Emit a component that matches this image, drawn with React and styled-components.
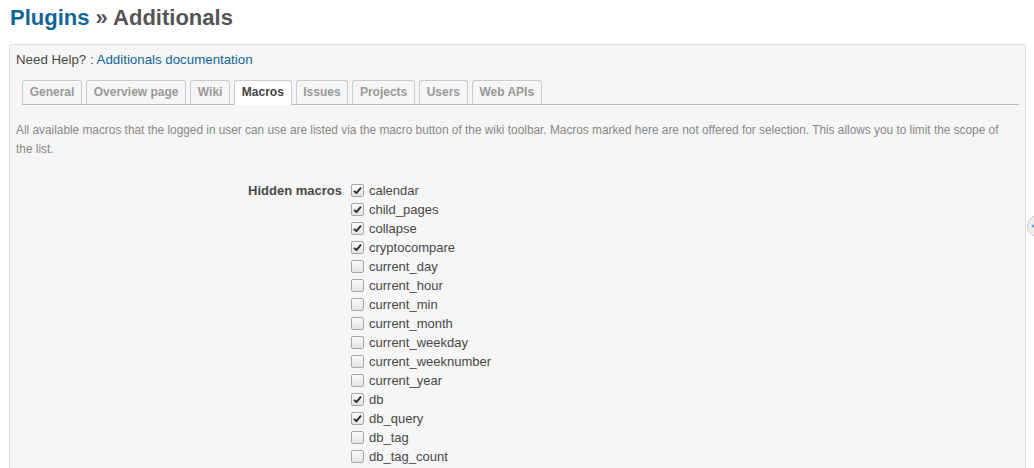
import styled, { createGlobalStyle } from "styled-components";

const GlobalStyle = createGlobalStyle`
  html, body {
    margin: 0;
    padding: 0;
    background: #fff;
  }
  body {
    font-family: "Liberation Sans", Arial, sans-serif;
    font-size: 13px;
    color: #484848;
    overflow: hidden;
  }
`;

const Page = styled.div`
  position: relative;
  width: 1034px;
  height: 468px;
  overflow: hidden;
  padding: 6px 9px 0 9px;
  box-sizing: border-box;
`;

const Title = styled.h2`
  margin: 0 0 0 1px;
  font-size: 22px;
  line-height: 24px;
  font-weight: bold;
  color: #555;
`;

const TitleLink = styled.a`
  color: #116699;
  text-decoration: none;
`;

const Box = styled.div`
  margin-top: 14px;
  width: 1017px;
  box-sizing: border-box;
  background: #f6f6f6;
  border: 1px solid #ddd;
  border-radius: 3px;
  padding: 7px 6px 20px 6px;
  min-height: 440px;
`;

const Help = styled.p`
  margin: 0;
  line-height: 16px;
  font-size: 13.3px;
`;

const HelpLink = styled.a`
  color: #116699;
  text-decoration: none;
`;

const Tabs = styled.ul`
  list-style: none;
  margin: 12px 0 0 6px;
  padding: 0;
  display: flex;
  gap: 4px;
  border-bottom: 1px solid #bbb;
`;

const Tab = styled.li`
  font-size: 12px;
  font-weight: bold;
  line-height: 14px;
  padding: 4px 6.7px 5px 6.7px;
  border: 1px solid #ccc;
  border-bottom: none;
  border-radius: 3px 3px 0 0;
  background: ${(p) => (p.$active ? "#fff" : "#f6f6f6")};
  color: ${(p) => (p.$active ? "#444" : "#999")};
  margin-bottom: ${(p) => (p.$active ? "-1px" : "0")};
  padding-bottom: ${(p) => (p.$active ? "6px" : "5px")};
`;

const Info = styled.p`
  margin: 16px 0 0 0;
  padding-right: 14px;
  font-size: 11.85px;
  line-height: 19px;
  color: #888;
`;

const Form = styled.div`
  display: grid;
  grid-template-columns: 326px 1fr;
  column-gap: 9px;
  margin-top: 22px;
`;

const FieldLabel = styled.div`
  text-align: right;
  font-weight: bold;
  font-size: 13px;
  line-height: 19px;
`;

const OptionList = styled.div`
  display: flex;
  flex-direction: column;
`;

const Option = styled.label`
  display: flex;
  align-items: center;
  gap: 5px;
  height: 19px;
  font-size: 13px;
  color: #484848;
`;

const Check = styled.span`
  width: 11px;
  height: 11px;
  border: 1px solid #a6a6a6;
  border-radius: 2px;
  background: linear-gradient(#fbfbfb, #e4e4e4);
  display: flex;
  align-items: center;
  justify-content: center;
  flex: none;
`;

const SideToggle = styled.div`
  position: absolute;
  left: 1027px;
  top: 215px;
  width: 20px;
  height: 20px;
  border-radius: 50%;
  border: 1px solid #ccc;
  background: #eee;
  &::after {
    content: "";
    position: absolute;
    left: 3px;
    top: 7px;
    border-right: 5px solid #5b9bd5;
    border-top: 3px solid transparent;
    border-bottom: 3px solid transparent;
  }
`;

const tabs = ["General", "Overview page", "Wiki", "Macros", "Issues", "Projects", "Users", "Web APIs"];

const macros = [
  ["calendar", true],
  ["child_pages", true],
  ["collapse", true],
  ["cryptocompare", true],
  ["current_day", false],
  ["current_hour", false],
  ["current_min", false],
  ["current_month", false],
  ["current_weekday", false],
  ["current_weeknumber", false],
  ["current_year", false],
  ["db", true],
  ["db_query", true],
  ["db_tag", false],
  ["db_tag_count", false],
];

const CheckBox = ({ checked }) => (
  <Check>
    {checked && (
      <svg width="9" height="9" viewBox="0 0 9 9">
        <path d="M1 4.8 L3.4 7.2 L8 1.6" fill="none" stroke="#2e2e2e" strokeWidth="1.9" strokeLinejoin="round" />
      </svg>
    )}
  </Check>
);

const App = () => (
  <Page>
    <GlobalStyle />
    <Title>
      <TitleLink href="#">Plugins</TitleLink> » Additionals
    </Title>
    <Box>
      <Help>
        Need Help? : <HelpLink href="#">Additionals documentation</HelpLink>
      </Help>
      <Tabs>
        {tabs.map((t) => (
          <Tab key={t} $active={t === "Macros"}>
            {t}
          </Tab>
        ))}
      </Tabs>
      <Info>
        All available macros that the logged in user can use are listed via the macro button of the wiki toolbar. Macros marked here are not offered for selection. This allows you to limit the scope of the list.
      </Info>
      <Form>
        <FieldLabel>Hidden macros</FieldLabel>
        <OptionList>
          {macros.map(([name, checked]) => (
            <Option key={name}>
              <CheckBox checked={checked} />
              {name}
            </Option>
          ))}
        </OptionList>
      </Form>
    </Box>
    <SideToggle />
  </Page>
);

export default App;
